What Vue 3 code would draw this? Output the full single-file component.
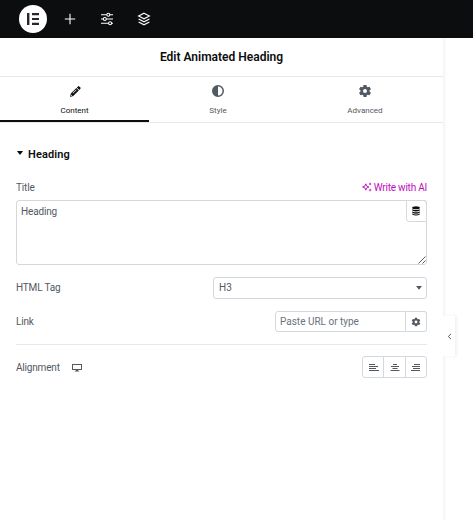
<template>
    <div class="editor">
        <header class="topbar">
            <button class="logo" aria-label="Menu">
                <svg width="28" height="28" viewBox="0 0 28 28">
                    <circle cx="14" cy="14" r="14" fill="#fff" />
                    <path d="M8 8h2.4v12H8zM13 8h7v2.2h-7zM13 12.9h7v2.2h-7zM13 17.8h7V20h-7z" fill="#2b2430" />
                </svg>
            </button>
            <button class="tool add" aria-label="Add element">
                <svg width="12" height="12" viewBox="0 0 12 12"><path d="M6 .8v10.4M.8 6h10.4" /></svg>
            </button>
            <button class="tool settings" aria-label="Site settings">
                <svg width="14" height="14" viewBox="0 0 14 14">
                    <path d="M1 2.7h5.7M9.9 2.7H13M1 7h2.2M6.4 7H13M1 11.3h7.5M11.7 11.3H13" />
                    <circle cx="8.3" cy="2.7" r="1.5" />
                    <circle cx="4.8" cy="7" r="1.5" />
                    <circle cx="10.1" cy="11.3" r="1.5" />
                </svg>
            </button>
            <button class="tool layers" aria-label="Structure">
                <svg width="14" height="14" viewBox="0 0 14 14">
                    <path d="M7 1.2 12.4 4 7 6.8 1.6 4ZM1.6 7 7 9.8 12.4 7M1.6 10 7 12.8 12.4 10" />
                </svg>
            </button>
        </header>
        <div class="workspace">
            <aside class="panel">
                <h1>Edit Animated Heading</h1>
                <nav class="tabs">
                    <button
                        v-for="tab in tabs"
                        :key="tab.name"
                        class="tab"
                        :class="{ active: activeTab === tab.name }"
                        @click="activeTab = tab.name"
                    >
                        <svg width="14" height="14" viewBox="0 0 14 14">
                            <path :d="tab.icon" fill="currentColor" fill-rule="evenodd" />
                        </svg>
                        <span>{{ tab.name }}</span>
                    </button>
                </nav>
                <section class="controls">
                    <h2>
                        <svg width="8" height="5" viewBox="0 0 8 5"><path d="M.9 0h6.2L4 4Z" fill="currentColor" /></svg>
                        Heading
                    </h2>
                    <div class="row title-row">
                        <label>Title</label>
                        <button class="ai">
                            <svg width="10" height="10" viewBox="0 0 10 10">
                                <path d="M3.8 1.8 4.7 4.1 7 5 4.7 5.9 3.8 8.2 2.9 5.9.6 5 2.9 4.1Z" fill="none" stroke="currentColor" stroke-width=".9" />
                                <path d="M8.1.3 8.6 1.4 9.7 1.9 8.6 2.4 8.1 3.5 7.6 2.4 6.5 1.9 7.6 1.4ZM8.1 6.5 8.6 7.6 9.7 8.1 8.6 8.6 8.1 9.7 7.6 8.6 6.5 8.1 7.6 7.6Z" fill="currentColor" />
                            </svg>
                            Write with AI
                        </button>
                    </div>
                    <div class="text-wrap">
                        <textarea v-model="title"></textarea>
                        <button class="dynamic" aria-label="Dynamic tags">
                            <svg width="8" height="10" viewBox="0 0 8 10" fill="currentColor">
                                <ellipse cx="4" cy="1.8" rx="3.8" ry="1.5" />
                                <path d="M.2 3.2q3.8 1.7 7.6 0v1.4q-3.8 1.7-7.6 0ZM.2 5.4q3.8 1.7 7.6 0v1.4q-3.8 1.7-7.6 0ZM.2 7.6q3.8 1.7 7.6 0v1q-3.8 2-7.6 0Z" />
                            </svg>
                        </button>
                        <svg class="grip" width="8" height="8" viewBox="0 0 8 8">
                            <path d="M.5 7.5l7-7M4.5 7.5l3-3" stroke="#444" stroke-width=".9" />
                        </svg>
                    </div>
                    <div class="row tag-row">
                        <label>HTML Tag</label>
                        <div class="select">
                            <span>{{ tag }}</span>
                            <svg width="6" height="4" viewBox="0 0 6 4"><path d="M0 0h6L3 3.7Z" fill="currentColor" /></svg>
                        </div>
                    </div>
                    <div class="row link-row">
                        <label>Link</label>
                        <div class="link">
                            <input v-model="url" placeholder="Paste URL or type" />
                            <button aria-label="Link options">
                                <svg width="10" height="10" viewBox="0 0 14 14">
                                    <path :d="gear" fill="currentColor" fill-rule="evenodd" />
                                </svg>
                            </button>
                        </div>
                    </div>
                    <div class="row align-row">
                        <label>Alignment</label>
                        <svg class="device" width="10" height="9" viewBox="0 0 10 9">
                            <rect x=".5" y="1.5" width="9" height="5" fill="none" stroke="currentColor" />
                            <path d="M3.8 6.8h2.4v1H7.2v.7H2.8v-.7h1Z" fill="currentColor" />
                        </svg>
                        <div class="choices">
                            <button v-for="item in alignments" :key="item.name" :aria-label="item.name">
                                <svg width="10" height="8" viewBox="0 0 10 8">
                                    <path :d="item.lines" stroke="currentColor" />
                                </svg>
                            </button>
                        </div>
                    </div>
                </section>
            </aside>
            <button class="collapse" aria-label="Hide panel">
                <svg width="5" height="7" viewBox="0 0 5 7"><path d="M4 .9 1.3 3.5 4 6.1" fill="none" stroke="currentColor" /></svg>
            </button>
        </div>
    </div>
</template>
<script setup>
import { ref } from "vue";

const gear =
    "M5.5 1h3l.3 1.7 1 .6 1.7-.6 1.5 2.5-1.4 1.1v1.4L13 8.8l-1.5 2.5-1.7-.6-1 .6L8.5 13h-3l-.3-1.7-1-.6-1.7.6L1 8.8l1.4-1.1V6.3L1 5.2l1.5-2.5 1.7.6 1-.6ZM7 5a2 2 0 1 0 0 4 2 2 0 0 0 0-4Z";

const tabs = [
    {
        name: "Content",
        icon: "M10 2.4q.6-.6 1.2 0l1.2 1.2q.6.6 0 1.2l-1.1 1.1-2.4-2.4ZM8.4 4l2.4 2.4-5.6 5.6-3.1.9.7-3.3ZM8.2 5.5 4.6 9.1l.4.4 3.6-3.6ZM3.3 10.6l-.3 1.3 1.3-.3Z",
    },
    {
        name: "Style",
        icon: "M7 1a6 6 0 1 0 0 12A6 6 0 0 0 7 1ZM7 2.5a4.5 4.5 0 0 1 0 9Z",
    },
    { name: "Advanced", icon: gear },
];

const alignments = [
    { name: "Left", lines: "M0 .5h6M0 2.5h9M0 4.5h7M0 6.5h10" },
    { name: "Center", lines: "M3 .5h4M1 2.5h8M2.5 4.5h5M.5 6.5h9" },
    { name: "Right", lines: "M3 .5h6M1 2.5h8M2 4.5h7M0 6.5h9" },
];

const activeTab = ref("Content");
const title = ref("Heading");
const tag = ref("H3");
const url = ref("");
</script>
<style>
body {
    background: #fff;
}
</style>
<style scoped>
.editor {
    height: 521px;
    overflow: hidden;
    display: flex;
    flex-direction: column;
    font-family: Roboto, Arial, sans-serif;
    font-size: 10px;
    color: #515962;
}
.editor * {
    box-sizing: border-box;
}
button,
input,
textarea {
    font: inherit;
    color: inherit;
    margin: 0;
    padding: 0;
    border: 0;
    background: none;
    outline: none;
}
svg {
    display: block;
    flex: none;
}
.topbar {
    height: 38px;
    flex: none;
    display: flex;
    align-items: center;
    padding-left: 19px;
    background: #0c0d0e;
    color: #fff;
}
.tool svg {
    fill: none;
    stroke: currentColor;
    stroke-width: 1.1;
}
.add {
    margin-left: 17px;
}
.settings {
    margin-left: 24px;
}
.layers {
    margin-left: 23px;
}
.workspace {
    flex: 1;
    display: flex;
    align-items: flex-start;
}
.panel {
    width: 443px;
    height: 100%;
    background: #fff;
    box-shadow: 1px 0 4px rgba(0, 0, 0, 0.07);
}
h1 {
    height: 39px;
    margin: 0;
    border-bottom: 1px solid #e6e8ea;
    font-size: 12px;
    font-weight: 600;
    line-height: 38px;
    text-align: center;
    color: #0c0d0e;
}
.tabs {
    height: 46px;
    display: grid;
    grid-template-columns: 149px 138px 156px;
    border-bottom: 1px solid #e6e8ea;
}
.tab {
    display: flex;
    flex-direction: column;
    align-items: center;
    padding-top: 7px;
    border-bottom: 2px solid transparent;
    font-size: 8px;
}
.tab span {
    margin-top: 7px;
    line-height: 11px;
}
.tab.active {
    color: #0c0d0e;
    border-bottom-color: #0c0d0e;
}
.controls {
    padding: 0 16px;
}
h2 {
    display: flex;
    align-items: center;
    gap: 4px;
    height: 20px;
    margin: 21px 0 0;
    font-size: 11px;
    font-weight: 600;
    letter-spacing: 0.1px;
    color: #0c0d0e;
}
h2 svg {
    margin-top: -2px;
}
.row {
    display: flex;
    align-items: center;
    justify-content: space-between;
}
.row label {
    letter-spacing: -0.18px;
}
.title-row {
    height: 16px;
    margin-top: 15px;
}
.ai {
    display: flex;
    align-items: center;
    gap: 2px;
    letter-spacing: -0.22px;
    color: #c00bb9;
}
.text-wrap {
    position: relative;
    height: 65px;
    margin-top: 5px;
}
textarea {
    display: block;
    width: 100%;
    height: 100%;
    padding: 4px;
    border: 1px solid #d5d8dc;
    border-radius: 3px;
    line-height: 13px;
    letter-spacing: -0.15px;
    resize: none;
}
.dynamic {
    position: absolute;
    top: 0;
    right: 0;
    width: 21px;
    height: 22px;
    display: grid;
    place-items: center;
    border: 1px solid #d5d8dc;
    border-radius: 0 3px 0 3px;
    color: #0c0d0e;
}
.dynamic svg {
    margin-right: 1px;
}
.grip {
    position: absolute;
    right: 1px;
    bottom: 1px;
}
.tag-row {
    height: 22px;
    margin-top: 12px;
}
.tag-row label,
.select span {
    margin-top: -1px;
}
.select {
    width: 214px;
    height: 22px;
    display: flex;
    align-items: center;
    justify-content: space-between;
    padding: 0 4px 0 5px;
    border: 1px solid #d5d8dc;
    border-radius: 3px;
}
.link-row {
    height: 21px;
    margin-top: 12px;
}
.link {
    display: flex;
    height: 21px;
}
.link input {
    width: 131px;
    padding: 0 4px;
    border: 1px solid #d5d8dc;
    border-radius: 3px 0 0 3px;
}
.link input::placeholder {
    color: #69727d;
    opacity: 1;
}
.link button {
    width: 21px;
    display: grid;
    place-items: center;
    border: 1px solid #d5d8dc;
    border-left: 0;
    border-radius: 0 3px 3px 0;
}
.align-row {
    height: 34px;
    margin-top: 12px;
    padding-top: 11px;
    border-top: 1px solid #e6e8ea;
}
.device {
    margin: 0 auto 0 12px;
}
.choices {
    display: flex;
    width: 65px;
    height: 22px;
    border: 1px solid #d5d8dc;
    border-radius: 3px;
}
.choices button {
    flex: 1;
    display: grid;
    place-items: center;
}
.choices button + button {
    border-left: 1px solid #d5d8dc;
}
.choices svg {
    margin: 1px 0 0 1px;
}
.collapse {
    position: relative;
    width: 12px;
    height: 40px;
    margin-top: 278px;
    display: grid;
    place-items: center;
    background: #fff;
    box-shadow: 2px 0 3px rgba(0, 0, 0, 0.06);
}
</style>
